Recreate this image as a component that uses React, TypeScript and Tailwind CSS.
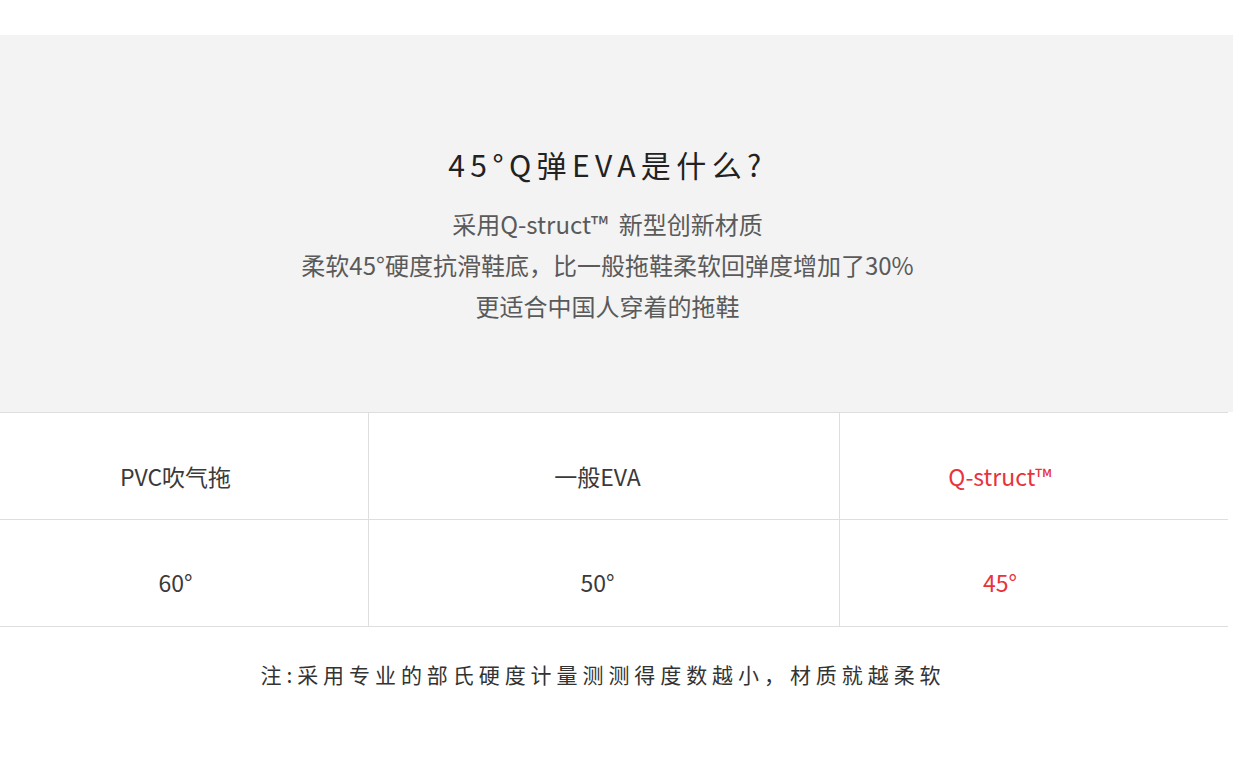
import React from 'react'

const font = { fontFamily: '"Noto Sans CJK SC", "Noto Sans", sans-serif' }

const rows = [
  { cells: ['PVC吹气拖', '一般EVA', 'Q-struct™'], pt: 'pt-[21px]' },
  { cells: ['60°', '50°', '45°'], pt: 'pt-[18px]' },
]

const colPad = ['pr-[17px]', 'pr-[13px]', 'pr-[68px]']

function App() {
  return (
    <div className="w-[1240px] h-[758px] bg-white overflow-hidden" style={font}>
      <div className="h-[35px]" />
      <div className="w-[1233px] h-[377px] bg-[#f3f3f3] flex flex-col items-center pt-[108px] pr-[18px]">
        <h1 className="text-[30px] leading-[42px] tracking-[0.18em] text-[#222] font-normal">
          45°Q弹EVA是什么?
        </h1>
        <div className="mt-[18px] flex flex-col items-center text-[24px] leading-[41px] text-[#5a5a5a]">
          <p>采用Q-struct™&nbsp; 新型创新材质</p>
          <p>柔软45°硬度抗滑鞋底，比一般拖鞋柔软回弹度增加了30%</p>
          <p>更适合中国人穿着的拖鞋</p>
        </div>
      </div>

      <div className="w-[1228px] border-t border-[#dedede]">
        {rows.map((row, i) => (
          <div key={i} className="grid grid-cols-[369px_471px_388px] h-[107px] border-b border-[#dedede]">
            {row.cells.map((c, j) => (
              <div
                key={j}
                className={`flex justify-center items-center ${row.pt} ${colPad[j]} text-[23px] ${j < 2 ? 'border-r border-[#dedede]' : ''} ${j === 2 ? 'text-[#e8333c]' : 'text-[#3a3a3a]'}`}
              >
                {c}
              </div>
            ))}
          </div>
        ))}
      </div>

      <p className="mt-[32px] pr-[34px] text-center text-[21px] tracking-[0.235em] text-[#333]">
        注:采用专业的部氏硬度计量测测得度数越小，材质就越柔软
      </p>
    </div>
  )
}

export default App
